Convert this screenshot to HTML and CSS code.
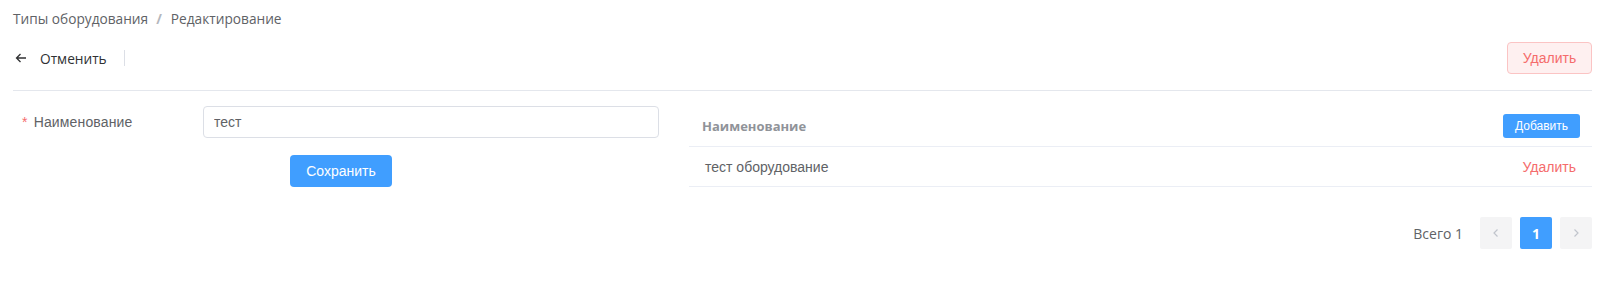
FILE: index.html
```html
<!DOCTYPE html>
<html lang="ru">
<head>
    <meta charset="UTF-8">
    <title>Типы оборудования — Редактирование</title>
    <link rel="stylesheet" href="styles.css">
</head>
<body>
    <div class="page">
        <div class="breadcrumb">
            <span class="crumb">Типы оборудования</span>
            <span class="sep">/</span>
            <span class="crumb current">Редактирование</span>
        </div>
        <div class="toolbar">
            <div class="back">
                <svg class="back-icon" width="12" height="10" viewBox="0 0 12 10">
                    <path d="M11 5H1.5M5.5 1L1.5 5l4 4" fill="none" stroke="#303133" stroke-width="1.3"/>
                </svg>
                <span class="back-text">Отменить</span>
                <span class="divider"></span>
            </div>
            <button class="btn-danger-plain">Удалить</button>
        </div>
        <div class="content">
            <div class="form">
                <div class="form-item">
                    <label class="form-label"><span class="req">*</span> Наименование</label>
                    <input class="input" type="text" value="тест">
                </div>
                <div class="form-actions">
                    <button class="btn-primary">Сохранить</button>
                </div>
            </div>
            <div class="list">
                <div class="table">
                    <div class="table-head">
                        <span class="th">Наименование</span>
                        <button class="btn-mini">Добавить</button>
                    </div>
                    <div class="table-row">
                        <span class="td">тест оборудование</span>
                        <a class="link-danger">Удалить</a>
                    </div>
                </div>
                <div class="pagination">
                    <span class="total">Всего 1</span>
                    <button class="pager-btn disabled">
                        <svg width="8" height="10" viewBox="0 0 8 10"><path d="M5.5 1.5L2 5l3.5 3.5" fill="none" stroke="#c0c4cc" stroke-width="1.2"/></svg>
                    </button>
                    <button class="pager-btn active">1</button>
                    <button class="pager-btn disabled">
                        <svg width="8" height="10" viewBox="0 0 8 10"><path d="M2.5 1.5L6 5 2.5 8.5" fill="none" stroke="#c0c4cc" stroke-width="1.2"/></svg>
                    </button>
                </div>
            </div>
        </div>
    </div>
</body>
</html>
```

FILE: styles.css
```css
body {
    margin: 0;
    background: #ffffff;
    font-family: 'Liberation Sans', Arial, sans-serif;
    font-size: 14px;
    color: #606266;
}
.page {
    padding: 0 7px 0 13px;
}
.breadcrumb {
    height: 37px;
    display: flex;
    align-items: center;
    font-family: 'Open Sans', sans-serif;
    font-size: 13.7px;
    color: #606266;
}
.sep {
    margin: 0 9px 0 8px;
    font-weight: bold;
    color: #b4b7bd;
}
.toolbar {
    display: flex;
    justify-content: space-between;
    align-items: center;
    padding: 5px 0 16px;
    border-bottom: 1px solid #e4e7ed;
}
.back {
    display: flex;
    align-items: center;
    font-family: 'Open Sans', sans-serif;
    font-size: 13.7px;
    color: #303133;
}
.back-icon {
    margin: 0 13px 0 2px;
}
.divider {
    width: 1px;
    height: 16px;
    background: #dcdfe6;
    margin-left: 17px;
}
.btn-danger-plain {
    height: 32px;
    width: 85px;
    border: 1px solid #fbc4c4;
    background: #fef0f0;
    color: #f56c6c;
    border-radius: 4px;
    font-family: 'Liberation Sans', Arial, sans-serif;
    font-size: 14px;
}
.content {
    display: grid;
    grid-template-columns: 646px 1fr;
    column-gap: 30px;
}
.form-item {
    display: flex;
    align-items: center;
    margin-top: 15px;
}
.form-label {
    width: 181px;
    padding-left: 9px;
    color: #606266;
    letter-spacing: 0.15px;
}
.req {
    color: #f56c6c;
    margin-right: 2px;
}
.input {
    flex: 1;
    height: 32px;
    box-sizing: border-box;
    border: 1px solid #dcdfe6;
    border-radius: 4px;
    padding: 0 10px;
    font-family: 'Liberation Sans', Arial, sans-serif;
    font-size: 14px;
    color: #606266;
}
.form-actions {
    display: flex;
    justify-content: center;
    padding-left: 10px;
    margin-top: 17px;
}
.btn-primary {
    height: 32px;
    width: 102px;
    border: none;
    border-radius: 4px;
    background: #409eff;
    color: #ffffff;
    font-family: 'Liberation Sans', Arial, sans-serif;
    font-size: 14px;
}
.table {
    margin-top: 15px;
}
.table-head {
    display: flex;
    justify-content: space-between;
    align-items: center;
    height: 41px;
    box-sizing: border-box;
    padding: 0 12px 0 13px;
    border-bottom: 1px solid #ebeef5;
}
.th {
    font-family: 'Open Sans', sans-serif;
    font-weight: bold;
    font-size: 13px;
    color: #909399;
}
.btn-mini {
    height: 24px;
    width: 77px;
    border: none;
    border-radius: 3px;
    background: #409eff;
    color: #ffffff;
    font-family: 'Liberation Sans', Arial, sans-serif;
    font-size: 12px;
}
.table-row {
    display: flex;
    justify-content: space-between;
    align-items: center;
    height: 40px;
    box-sizing: border-box;
    padding: 0 16px;
    border-bottom: 1px solid #ebeef5;
}
.link-danger {
    color: #f56c6c;
}
.pagination {
    display: flex;
    justify-content: flex-end;
    align-items: center;
    margin-top: 30px;
}
.total {
    font-family: 'Open Sans', sans-serif;
    color: #606266;
    margin-right: 17px;
}
.pager-btn {
    width: 32px;
    height: 32px;
    border: none;
    border-radius: 2px;
    background: #f4f4f5;
    margin-left: 8px;
    display: flex;
    align-items: center;
    justify-content: center;
    padding: 0;
    font-family: 'Open Sans', sans-serif;
    font-weight: bold;
    font-size: 14px;
}
.pager-btn:first-of-type {
    margin-left: 0;
}
.pager-btn.active {
    background: #409eff;
    color: #ffffff;
}
```
